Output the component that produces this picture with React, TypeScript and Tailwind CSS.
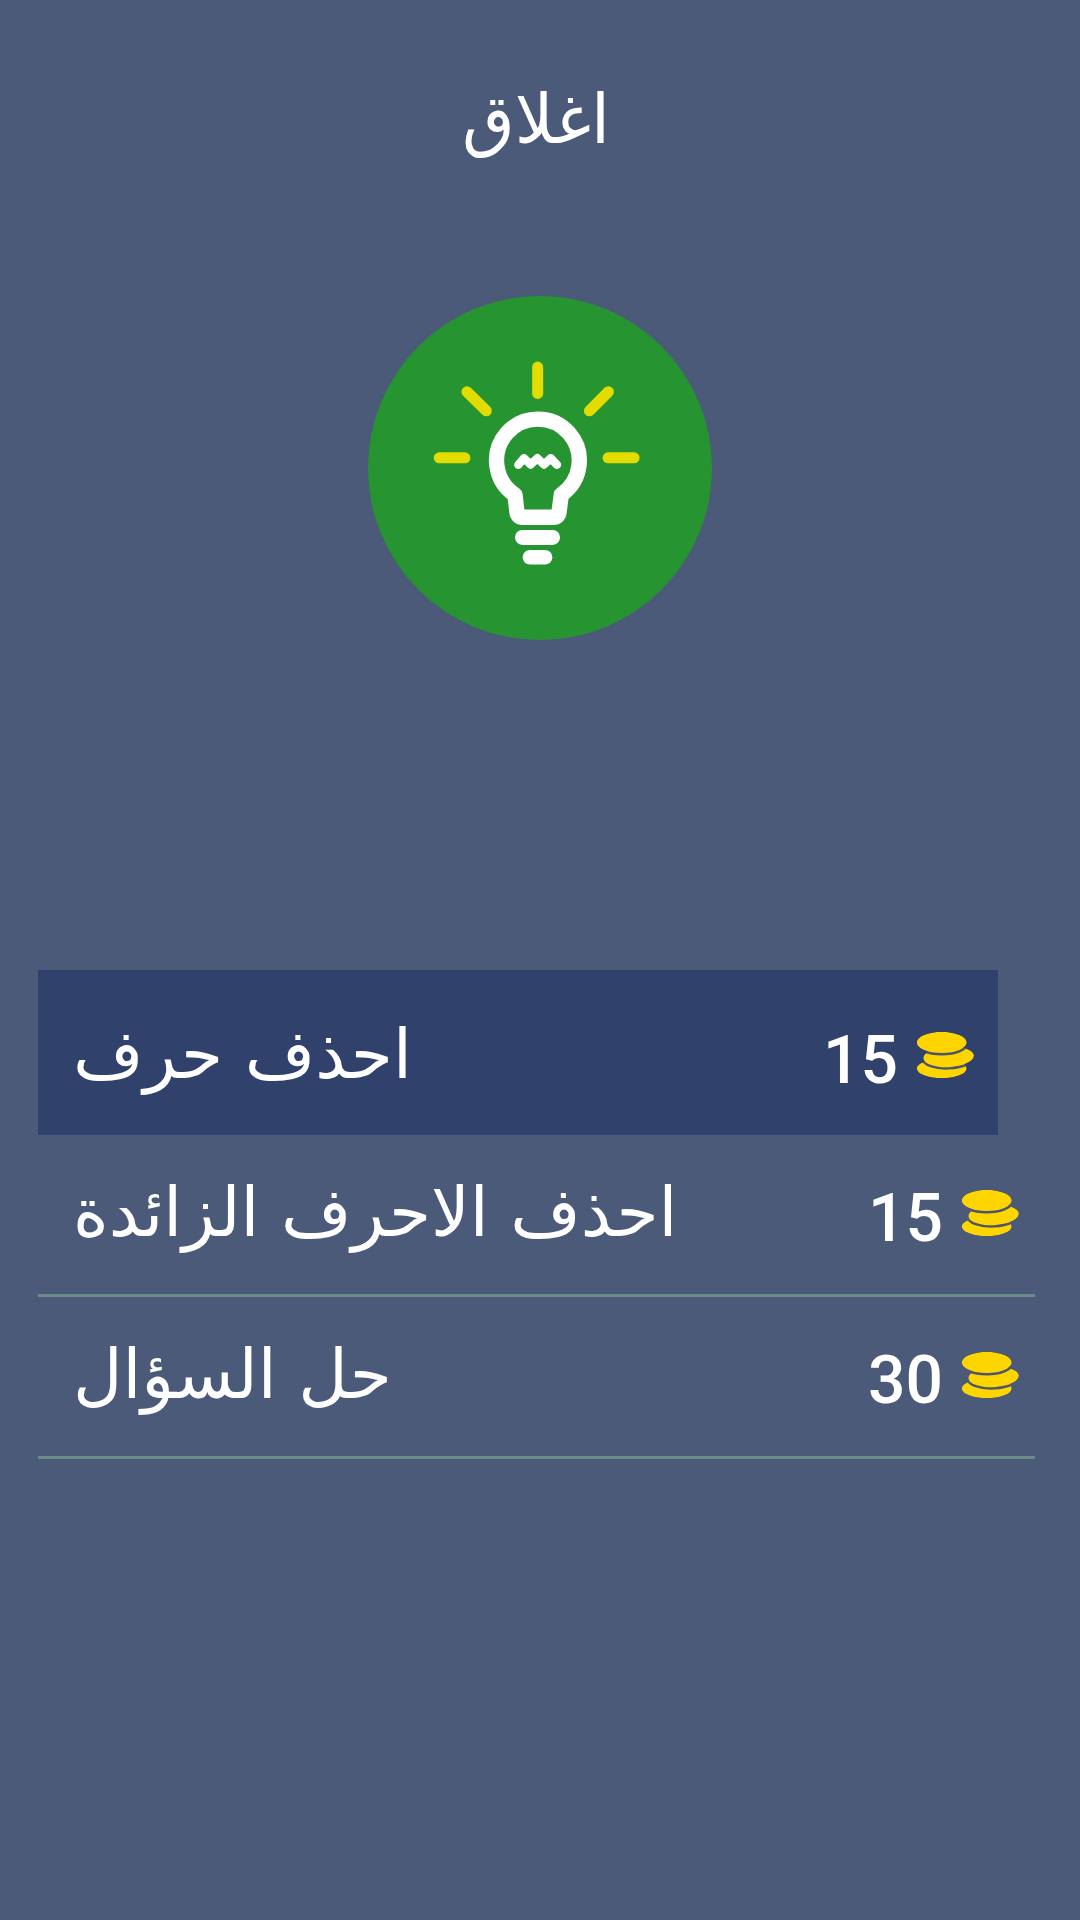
import React from 'react';

const Coins = () => (
  <svg viewBox="410 210 175 145" className="w-[60px] h-[50px] shrink-0 mb-[11px]">
    <defs>
      <clipPath id="coin-stack">
        <ellipse cx="488" cy="322" rx="73" ry="28" />
        <ellipse cx="508" cy="288" rx="74" ry="30" transform="rotate(-3 508 288)" />
        <ellipse cx="488" cy="246" rx="73" ry="31" />
      </clipPath>
    </defs>
    <g clipPath="url(#coin-stack)">
      <ellipse cx="488" cy="322" rx="73" ry="28" fill="#ffd500" />
      <ellipse cx="508" cy="288" rx="74" ry="30" fill="#ffd500" stroke="#4a5570" strokeWidth="14" paintOrder="stroke" transform="rotate(-3 508 288)" />
      <ellipse cx="488" cy="246" rx="73" ry="31" fill="#ffd500" stroke="#4a5570" strokeWidth="14" paintOrder="stroke" />
    </g>
  </svg>
);

const Bulb = () => (
  <svg viewBox="85 47 1030 1031" className="w-full h-full">
    <g stroke="#e2dc00" strokeWidth="33" strokeLinecap="round" fill="none">
      <path d="M593 260V339" />
      <path d="M381 334L439 391" />
      <path d="M805 334L748 391" />
      <path d="M298 532H375" />
      <path d="M804 532H882" />
    </g>
    <path
      d="M525 643L531 695Q533 710 548 710H640Q655 710 657 695L664 642A124 124 0 1 0 525 643Z"
      fill="none"
      stroke="#fff"
      strokeWidth="46"
      strokeLinejoin="round"
    />
    <path
      d="M535 553L552 533L572 552L592 533L612 552L632 533L651 553"
      fill="none"
      stroke="#fff"
      strokeWidth="25"
      strokeLinecap="round"
      strokeLinejoin="round"
    />
    <rect x="525" y="748" width="135" height="45" rx="22" fill="#fff" />
    <rect x="548" y="808" width="89" height="44" rx="22" fill="#fff" />
  </svg>
);

const HintRow = ({ label, price, active }: { label: string; price: number; active?: boolean }) => (
  <div
    className={
      active
        ? 'h-[165px] w-[960px] bg-[#30416b] flex items-center justify-between pl-[35px] pr-[23px]'
        : 'h-[162px] w-full border-b-[3px] border-[#6b8a8a] flex items-center justify-between pl-[35px] pr-[15px] pb-[8px]'
    }
  >
    <span className="text-[68px] pt-[4px] text-white font-['DejaVu_Sans',sans-serif]">{label}</span>
    <div className="flex items-center gap-[17px] pt-[16px]">
      <span className="text-[66px] leading-none font-medium text-white font-['Roboto',sans-serif]">{price}</span>
      <Coins />
    </div>
  </div>
);

export default function App() {
  return (
    <div className="w-[1080px] h-[1920px] bg-[#4b5a78] overflow-hidden flex flex-col">
      <div className="h-[240px] pt-[70px] text-center text-[68px] leading-[100px] text-white font-['DejaVu_Sans',sans-serif] pr-[8px]">
        اغلاق
      </div>
      <div className="w-[344px] h-[344px] ml-[368px] mt-[56px] rounded-full bg-[#279432]">
        <Bulb />
      </div>
      <div className="mt-[330px] ml-[38px] w-[997px] flex flex-col">
        <HintRow label="احذف حرف" price={15} active />
        <HintRow label="احذف الاحرف الزائدة" price={15} />
        <HintRow label="حل السؤال" price={30} />
      </div>
    </div>
  );
}
